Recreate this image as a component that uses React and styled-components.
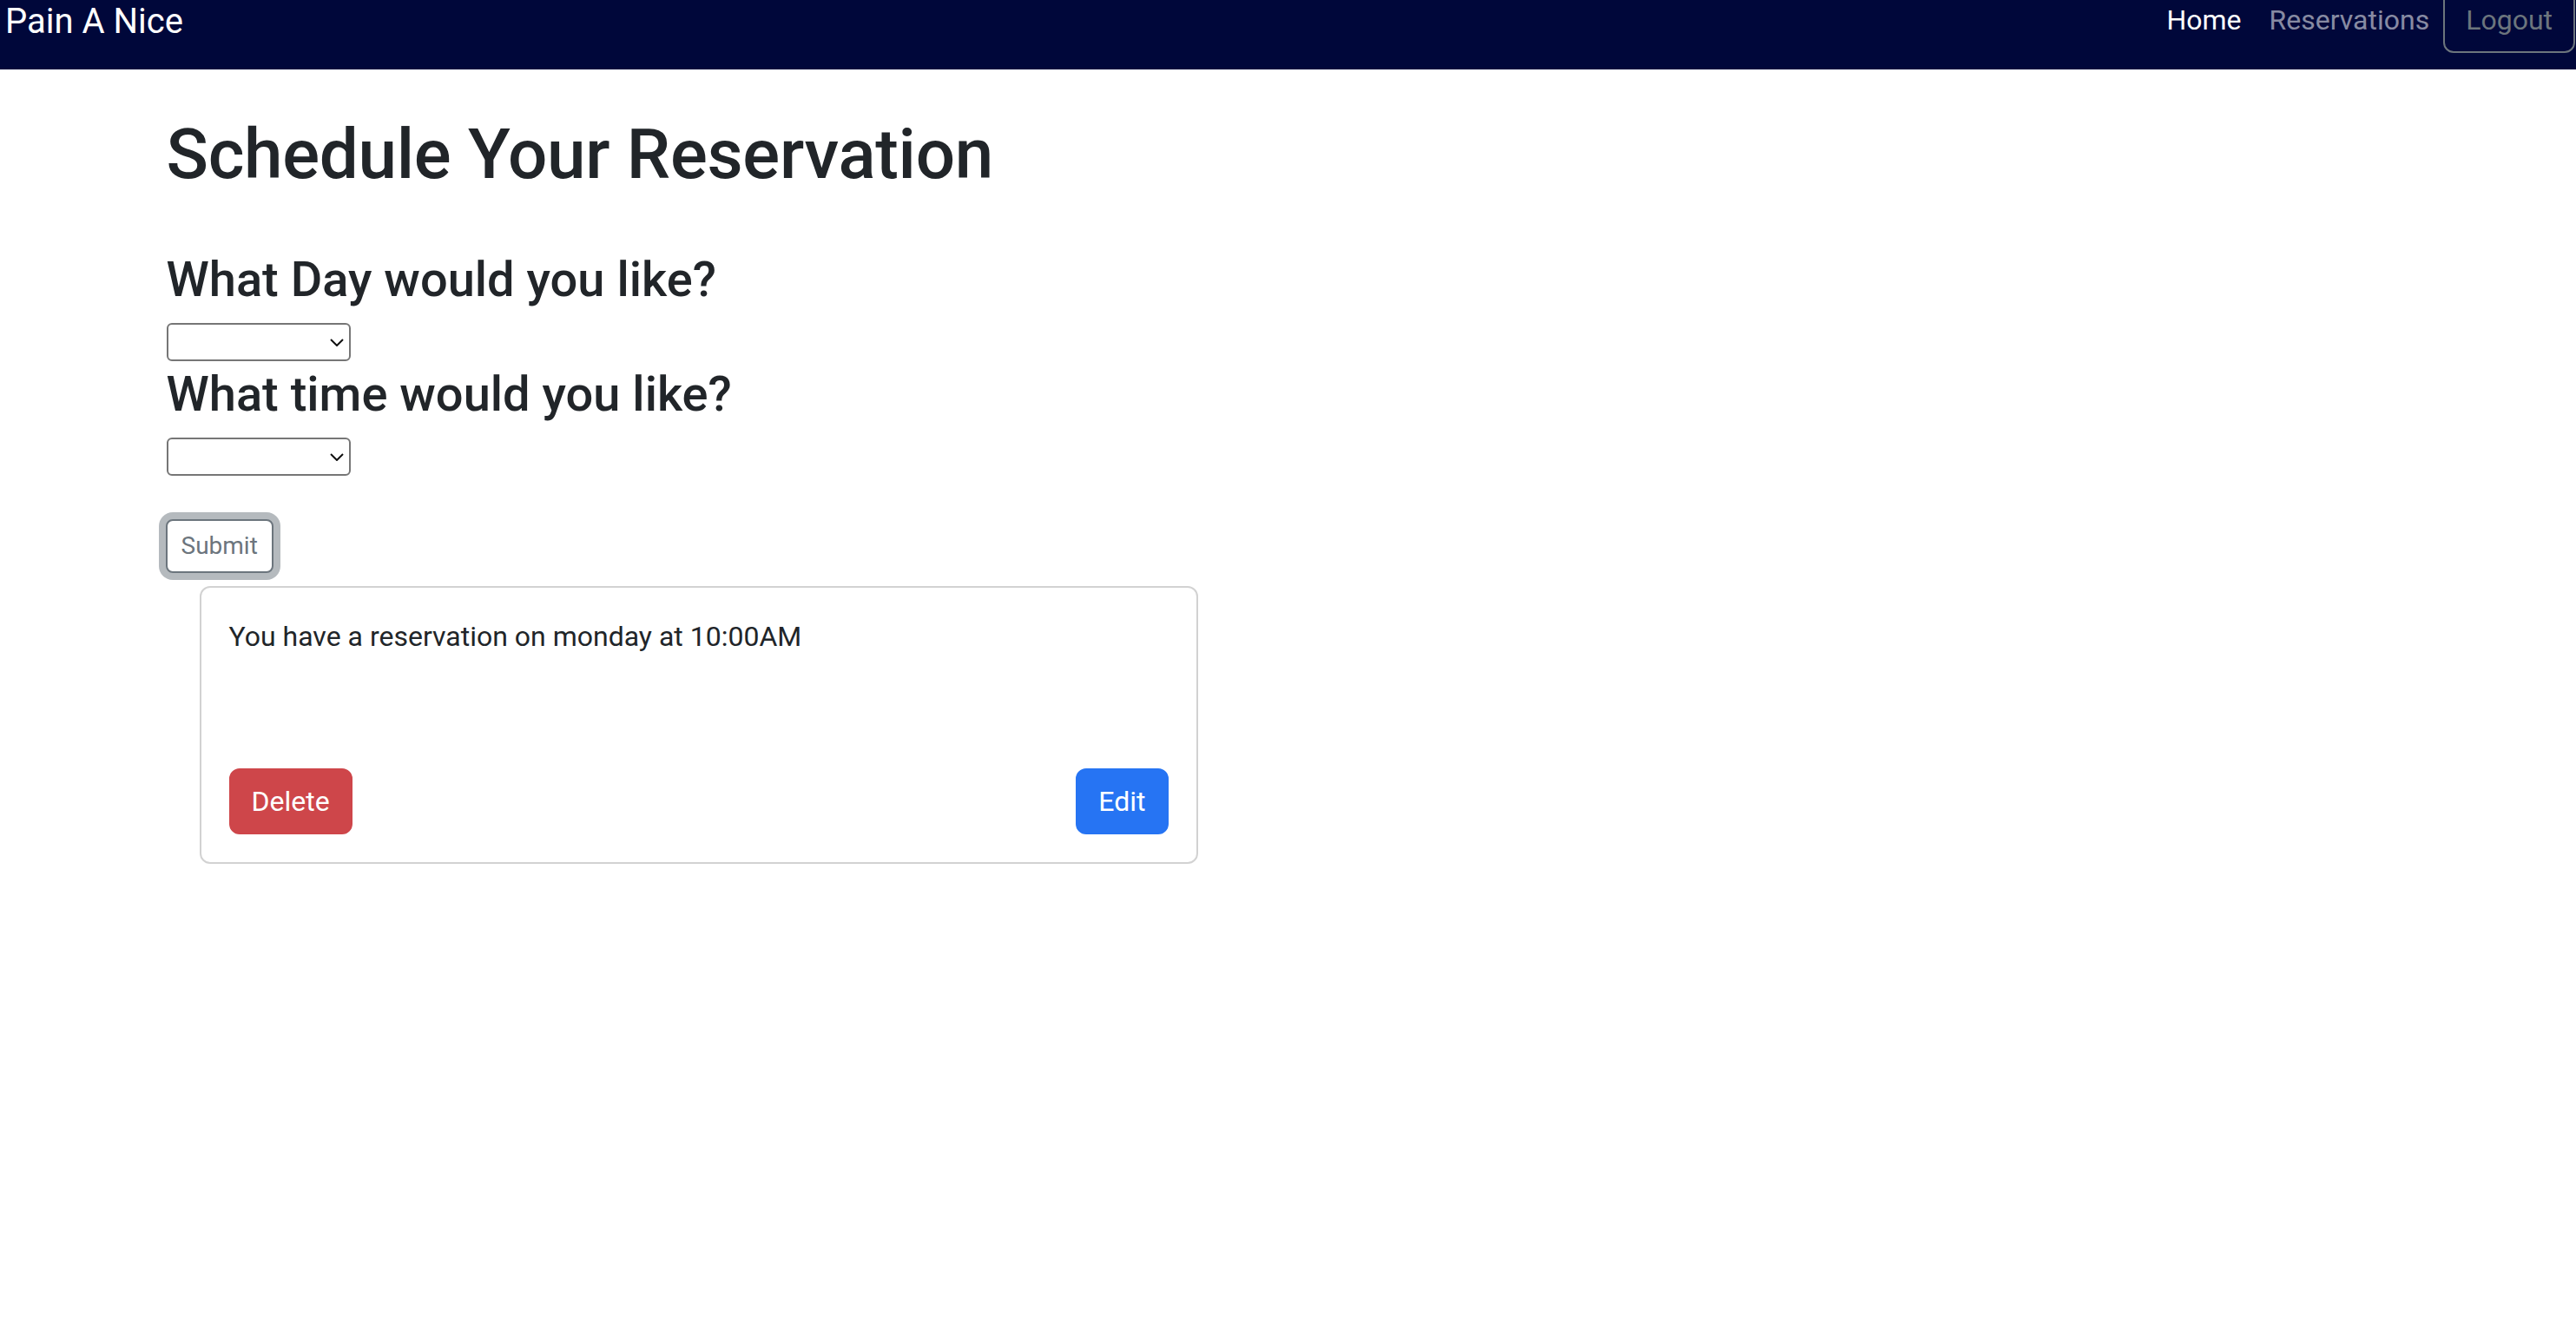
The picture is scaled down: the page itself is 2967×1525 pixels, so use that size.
import React from 'react'
import styled, { createGlobalStyle } from 'styled-components'

const GlobalStyle = createGlobalStyle`
    *, *::before, *::after {
        box-sizing: border-box;
    }
    body {
        margin: 0;
        background: #fff;
        color: #212529;
        font-family: Roboto, "Noto Sans", "Liberation Sans", sans-serif;
        font-size: 32px;
        line-height: 1.5;
    }
`

const Navbar = styled.nav`
    height: 80px;
    padding: 0 1px 34px 6px;
    background: #00073a;
    display: flex;
    align-items: center;
    justify-content: space-between;
    overflow: hidden;
`

const Brand = styled.a`
    margin-top: 4px;
    font-size: 40px;
    line-height: 1;
    color: #fff;
    text-decoration: none;
`

const NavList = styled.div`
    display: flex;
    align-items: center;
`

const NavLink = styled.a`
    padding: 0 16px;
    font-size: 32px;
    line-height: 1.2;
    text-decoration: none;
    color: ${props => props.active ? '#fff' : 'rgba(255, 255, 255, 0.55)'};
`

const LogoutButton = styled.button`
    height: 76px;
    padding: 0 24px;
    font: inherit;
    font-size: 32px;
    color: #6c757d;
    background: transparent;
    border: 2px solid #6c757d;
    border-radius: 12px;
`

const Container = styled.main`
    max-width: 2640px;
    margin: 0 auto;
    padding: 50px 24px 0 28px;
`

const Title = styled.h1`
    margin: 0 0 16px;
    font-size: 80px;
    font-weight: 500;
    line-height: 1.2;
    letter-spacing: -0.3px;
`

const Form = styled.form`
    margin-top: 63px;
`

const Question = styled.h3`
    margin: 0 0 16px;
    font-size: 56px;
    font-weight: 500;
    line-height: 1.2;
`

const SelectWrap = styled.div`
    position: relative;
    width: 212px;
    height: 44px;
    margin-top: ${props => props.last ? '3px' : '0'};
    margin-bottom: ${props => props.last ? '50px' : '5px'};

    svg {
        position: absolute;
        right: 8px;
        top: 18px;
        pointer-events: none;
    }
`

const Select = styled.select`
    appearance: none;
    display: block;
    width: 100%;
    height: 100%;
    border: 2px solid #767676;
    border-radius: 6px;
    background: #fff;
    font: inherit;
    font-size: 26px;
`

const SubmitButton = styled.button`
    margin-left: -1px;
    padding: 8px 16px;
    font: inherit;
    font-size: 28px;
    line-height: 1.5;
    color: #6c757d;
    background: #fff;
    border: 2px solid #6c757d;
    border-radius: 8px;
    box-shadow: 0 0 0 8px rgba(108, 117, 125, 0.5);
`

const Card = styled.div`
    width: 1150px;
    margin: 15px 0 0 38px;
    padding: 32px;
    border: 2px solid rgba(0, 0, 0, 0.175);
    border-radius: 12px;
`

const CardText = styled.p`
    margin: 0 0 128px;
`

const CardActions = styled.div`
    display: flex;
    justify-content: space-between;
`

const Button = styled.button`
    height: 76px;
    padding: 0 24px;
    font: inherit;
    font-size: 32px;
    color: #fff;
    background: ${props => props.variant === 'danger' ? '#ce464a' : '#2674f3'};
    border: 2px solid ${props => props.variant === 'danger' ? '#ce464a' : '#2674f3'};
    border-radius: 12px;
`

function Chevron() {
    return (
        <svg width="16" height="9" viewBox="0 0 16 9">
            <path d="M1 1 L8 8 L15 1" fill="none" stroke="#111" strokeWidth="2" />
        </svg>
    )
}

function DropDown({ last }) {
    return (
        <SelectWrap last={last}>
            <Select defaultValue="">
                <option value=""></option>
            </Select>
            <Chevron />
        </SelectWrap>
    )
}

export default function App() {
    return (
        <>
            <GlobalStyle />
            <Navbar>
                <Brand href="#">Pain A Nice</Brand>
                <NavList>
                    <NavLink href="#" active>Home</NavLink>
                    <NavLink href="#">Reservations</NavLink>
                    <LogoutButton>Logout</LogoutButton>
                </NavList>
            </Navbar>
            <Container>
                <Title>Schedule Your Reservation</Title>
                <Form onSubmit={e => e.preventDefault()}>
                    <Question>What Day would you like?</Question>
                    <DropDown />
                    <Question>What time would you like?</Question>
                    <DropDown last />
                    <SubmitButton type="submit">Submit</SubmitButton>
                </Form>
                <Card>
                    <CardText>You have a reservation on monday at 10:00AM</CardText>
                    <CardActions>
                        <Button variant="danger">Delete</Button>
                        <Button variant="primary">Edit</Button>
                    </CardActions>
                </Card>
            </Container>
        </>
    )
}
